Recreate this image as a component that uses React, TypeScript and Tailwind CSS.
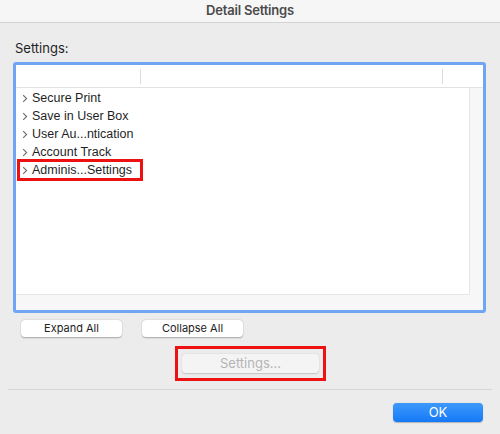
import React from "react";

const items = [
  "Secure Print",
  "Save in User Box",
  "User Au...ntication",
  "Account Track",
  "Adminis...Settings",
];

function Chevron() {
  return (
    <svg width="6" height="9" viewBox="0 0 6 9" className="shrink-0">
      <path d="M1.2 1.2 L4.6 4.5 L1.2 7.8" fill="none" stroke="#6b6b6b" strokeWidth="1.1" />
    </svg>
  );
}

const listFont = { fontFamily: "'Liberation Sans', Arial, sans-serif" };

export default function App() {
  return (
    <div
      className="w-[500px] h-[434px] bg-[#ececec] flex flex-col text-[#1f1f1f]"
      style={{ fontFamily: "Inter, 'Liberation Sans', sans-serif" }}
    >
      {/* window title */}
      <div className="h-[23px] shrink-0 bg-[#f6f6f6] border-b border-[#d3d3d3] flex items-center justify-center">
        <span className="text-[13px] font-semibold text-[#4a4a4a] tracking-[-0.2px]">Detail Settings</span>
      </div>

      <div className="pl-[15px] pt-[17px] text-[13px] leading-[16px]">Settings:</div>

      {/* tree view with focus ring */}
      <div className="mt-[6px] ml-[13px] w-[473px] h-[251px] rounded-[3px] border-[3px] border-[#6fa5f2] bg-[#f7f7f7] flex flex-col overflow-hidden">
        <div className="h-[23px] shrink-0 bg-white border-b border-[#e2e2e2] flex items-center">
          <div className="w-[125px] h-[15px] border-r border-[#dcdcdc]" />
          <div className="w-[302px] h-[15px] border-r border-[#dcdcdc]" />
        </div>
        <div className="flex-1 flex">
          <div className="w-[454px] h-[207px] bg-white border-r border-b border-[#e6e6e6] pt-[1px]" style={listFont}>
            {items.map((label, i) => (
              <div key={label} className="h-[18px] flex items-center pl-[6px]">
                {i === 4 ? (
                  <div className="ml-[-5px] h-[22px] w-[126px] border-[3px] border-[#ee1111] flex items-center pl-[2px] gap-[4px]">
                    <Chevron />
                    <span className="text-[12.5px] leading-none whitespace-nowrap">{label}</span>
                  </div>
                ) : (
                  <div className="flex items-center gap-[4px]">
                    <Chevron />
                    <span className="text-[12.5px] leading-none whitespace-nowrap">{label}</span>
                  </div>
                )}
              </div>
            ))}
          </div>
        </div>
      </div>

      {/* expand / collapse */}
      <div className="flex gap-[20px] ml-[21px] mt-[7px]">
        <button className="w-[101px] h-[17px] rounded-[4px] bg-white shadow-[0_0.5px_1.5px_rgba(0,0,0,0.3)] text-[11px] leading-none text-[#222]">
          Expand All
        </button>
        <button className="w-[101px] h-[17px] rounded-[4px] bg-white shadow-[0_0.5px_1.5px_rgba(0,0,0,0.3)] text-[11px] leading-none text-[#222]">
          Collapse All
        </button>
      </div>

      {/* disabled settings button */}
      <div className="mt-[9px] ml-[175px] w-[151px] h-[35px] border-[3px] border-[#ee1111] flex items-center justify-center">
        <div className="w-[137px] h-[19px] rounded-[4px] bg-[#f4f4f4] shadow-[0_0.5px_1.5px_rgba(0,0,0,0.18)] flex items-center justify-center text-[13px] text-[#b4b4b4]">
          Settings...
        </div>
      </div>

      <div className="mt-[8px] mx-[8px] border-t border-[#d6d6d6]" />

      <div className="flex justify-end pr-[17px] mt-[13px]">
        <button className="w-[90px] h-[19px] rounded-[4px] bg-gradient-to-b from-[#3d99fb] to-[#1479f7] text-white text-[13px] leading-none shadow-[0_0.5px_1px_rgba(0,0,0,0.25)]">
          OK
        </button>
      </div>
    </div>
  );
}
